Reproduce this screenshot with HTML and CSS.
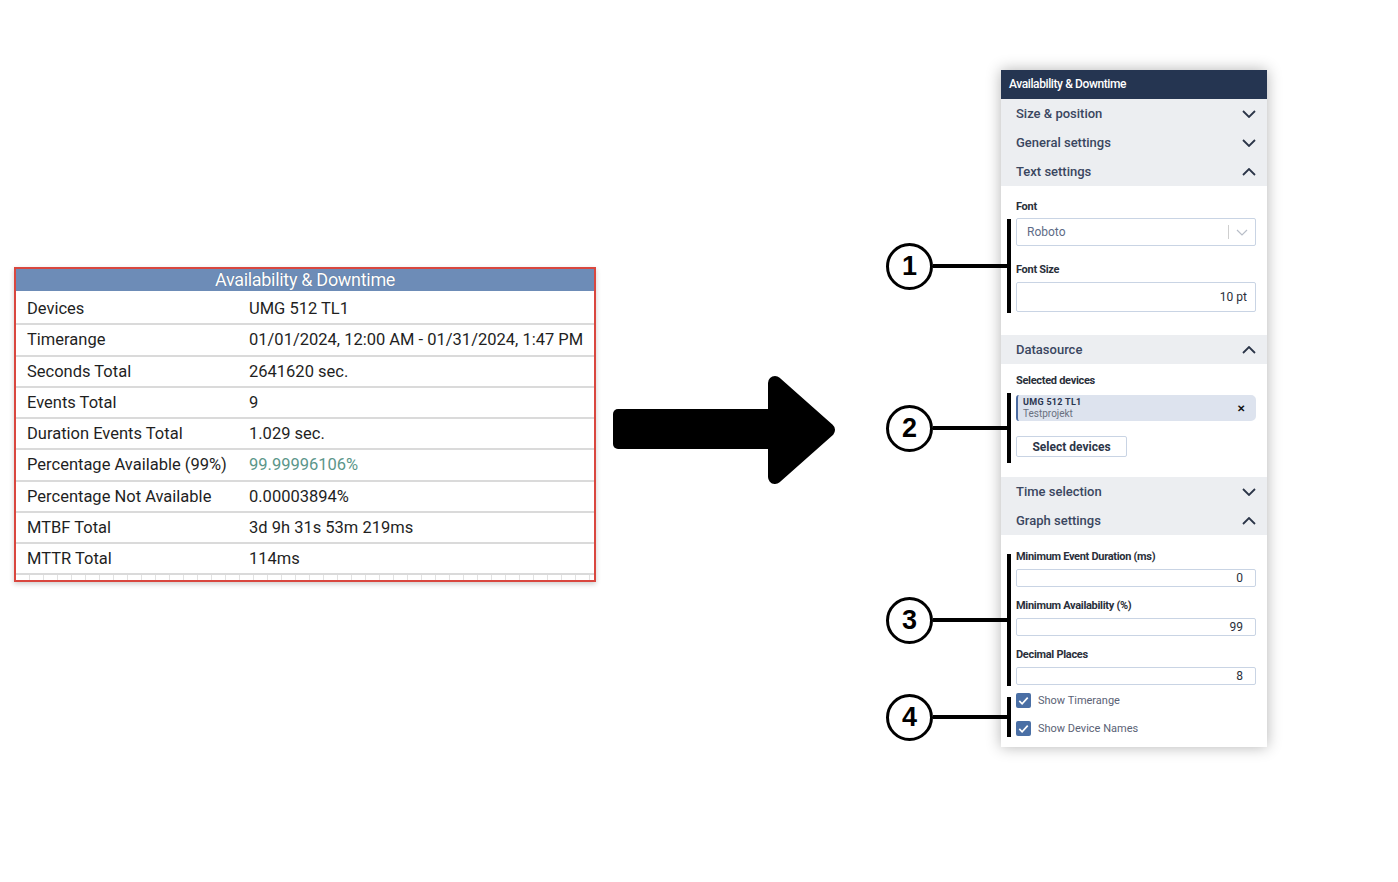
FILE: index.html
```html
<!DOCTYPE html>
<html lang="en">
<head>
  <meta charset="UTF-8">
  <title>Availability &amp; Downtime</title>
  <link rel="stylesheet" href="styles.css">
</head>
<body>

  <div class="canvas">

    <!-- widget preview -->
    <div class="report">
      <div class="report-title">Availability &amp; Downtime</div>
      <div class="report-row first"><span>Devices</span><span>UMG 512 TL1</span></div>
      <div class="report-row"><span>Timerange</span><span>01/01/2024, 12:00 AM - 01/31/2024, 1:47 PM</span></div>
      <div class="report-row"><span>Seconds Total</span><span>2641620 sec.</span></div>
      <div class="report-row"><span>Events Total</span><span>9</span></div>
      <div class="report-row"><span>Duration Events Total</span><span>1.029 sec.</span></div>
      <div class="report-row"><span>Percentage Available (99%)</span><span class="ok">99.99996106%</span></div>
      <div class="report-row"><span>Percentage Not Available</span><span>0.00003894%</span></div>
      <div class="report-row"><span>MTBF Total</span><span>3d 9h 31s 53m 219ms</span></div>
      <div class="report-row"><span>MTTR Total</span><span>114ms</span></div>
      <div class="report-end"></div>
    </div>

    <div class="arrow">
      <svg width="224" height="110" viewBox="0 0 224 110">
        <rect x="0" y="34" width="172" height="40" rx="5" fill="#000"/>
        <polygon points="162,8 215,55 162,102" fill="#000" stroke="#000" stroke-width="14" stroke-linejoin="round"/>
      </svg>
    </div>

    <!-- settings sidebar -->
    <div class="panel-wrap">
      <div class="panel">
        <div class="panel-title">Availability &amp; Downtime</div>

        <div class="acc">Size &amp; position
          <svg viewBox="0 0 14 8"><polyline points="1,1 7,7 13,1"/></svg>
        </div>
        <div class="acc">General settings
          <svg viewBox="0 0 14 8"><polyline points="1,1 7,7 13,1"/></svg>
        </div>
        <div class="acc">Text settings
          <svg viewBox="0 0 14 8"><polyline points="1,7 7,1 13,7"/></svg>
        </div>

        <div class="section text-section">
          <div class="field-label">Font</div>
          <div class="select">
            <span>Roboto</span>
            <span class="select-tail">
              <i class="divider"></i>
              <svg viewBox="0 0 12 7"><polyline points="1,1 6,6 11,1"/></svg>
            </span>
          </div>
          <div class="field-label spaced">Font Size</div>
          <div class="input tall">10 pt</div>
        </div>

        <div class="acc">Datasource
          <svg viewBox="0 0 14 8"><polyline points="1,7 7,1 13,7"/></svg>
        </div>

        <div class="section source-section">
          <div class="field-label">Selected devices</div>
          <div class="chip">
            <div>
              <div class="chip-name">UMG 512 TL1</div>
              <div class="chip-project">Testprojekt</div>
            </div>
            <span class="chip-x">&#x2715;</span>
          </div>
          <button class="select-btn">Select devices</button>
        </div>

        <div class="acc">Time selection
          <svg viewBox="0 0 14 8"><polyline points="1,1 7,7 13,1"/></svg>
        </div>
        <div class="acc">Graph settings
          <svg viewBox="0 0 14 8"><polyline points="1,7 7,1 13,7"/></svg>
        </div>

        <div class="section graph-section">
          <div class="field-label">Minimum Event Duration (ms)</div>
          <div class="input">0</div>
          <div class="field-label gap">Minimum Availability (%)</div>
          <div class="input">99</div>
          <div class="field-label gap">Decimal Places</div>
          <div class="input">8</div>
          <div class="check first-check">
            <span class="box"><svg viewBox="0 0 16 16"><polyline points="3.5,8.5 6.5,11.5 12.5,5"/></svg></span>
            Show Timerange
          </div>
          <div class="check">
            <span class="box"><svg viewBox="0 0 16 16"><polyline points="3.5,8.5 6.5,11.5 12.5,5"/></svg></span>
            Show Device Names
          </div>
        </div>
      </div>

      <!-- numbered callouts -->
      <div class="callout c1"><span class="num">1</span><i class="lead"></i></div>
      <div class="callout c2"><span class="num">2</span><i class="lead"></i></div>
      <div class="callout c3"><span class="num">3</span><i class="lead"></i></div>
      <div class="callout c4"><span class="num">4</span><i class="lead"></i></div>
    </div>

  </div>

</body>
</html>
```

FILE: styles.css
```css
body {
  margin: 0;
  background: #fff;
  font-family: Roboto, "Liberation Sans", sans-serif;
}
.canvas {
  display: flex;
  align-items: flex-start;
  padding-left: 14px;
  height: 882px;
  box-sizing: border-box;
}

/* report widget */
.report {
  margin-top: 267px;
  width: 582px;
  border: 2px solid #d9473f;
  box-sizing: border-box;
  background: #fff;
  box-shadow: 0 2px 5px rgba(0, 0, 0, 0.2);
}
.report-title {
  height: 22px;
  line-height: 22px;
  background: #6d8cb7;
  color: #fff;
  text-align: center;
  font-size: 18px;
  letter-spacing: -0.3px;
  text-shadow: 0 0 1px rgba(0, 0, 0, 0.3);
}
.report-row {
  display: grid;
  grid-template-columns: 222px 1fr;
  height: 29.25px;
  line-height: 29.25px;
  border-bottom: 2px solid #dadada;
  font-size: 16.5px;
  color: #1f1f1f;
}
.report-row.first {
  padding-top: 3px;
}
.report-row span {
  padding-left: 11px;
  white-space: nowrap;
}
.report-row .ok {
  color: #5b968a;
}
.report-end {
  height: 5px;
  background: repeating-linear-gradient(90deg, #fff 0 13px, #e2e2e2 13px 14px);
}

.arrow {
  margin-left: 17px;
  margin-top: 375px;
  height: 110px;
}

/* settings panel */
.panel-wrap {
  position: relative;
  margin-left: 164px;
  margin-top: 70px;
}
.panel {
  width: 266px;
  background: #fff;
  box-shadow: 0 0 14px rgba(0, 0, 0, 0.3);
}
.panel-title {
  height: 29px;
  line-height: 29px;
  padding-left: 8px;
  background: #253551;
  color: #fff;
  font-size: 12px;
  font-weight: 500;
  letter-spacing: -0.4px;
}
.acc {
  display: flex;
  justify-content: space-between;
  align-items: center;
  height: 29px;
  padding: 0 11px 0 15px;
  background: #eceef1;
  color: #3a4660;
  font-size: 13px;
  font-weight: 500;
}
.acc svg {
  width: 14px;
  height: 8px;
  fill: none;
  stroke: #2b3548;
  stroke-width: 1.8;
}
.section {
  padding: 0 11px 0 15px;
}
.text-section {
  padding-top: 14px;
  padding-bottom: 23px;
}
.source-section {
  padding-top: 10px;
  padding-bottom: 20px;
}
.graph-section {
  padding-top: 15px;
  padding-bottom: 11px;
}
.field-label {
  font-size: 11px;
  font-weight: 700;
  line-height: 14px;
  color: #2a2f3a;
  letter-spacing: -0.3px;
  margin-bottom: 4px;
}
.field-label.spaced {
  margin-top: 17px;
  margin-bottom: 5px;
}
.source-section .field-label {
  margin-bottom: 7px;
}
.graph-section .field-label {
  margin-bottom: 5px;
}
.graph-section .field-label.gap {
  margin-top: 12px;
}
.select {
  display: flex;
  justify-content: space-between;
  align-items: center;
  height: 28px;
  box-sizing: border-box;
  border: 1px solid #c9d4e4;
  border-radius: 2px;
  padding: 0 7px 0 10px;
  font-size: 12px;
  color: #5d6b86;
}
.select-tail {
  display: flex;
  align-items: center;
  gap: 7px;
}
.select-tail .divider {
  width: 1px;
  height: 14px;
  background: #cfcfcf;
}
.select-tail svg {
  width: 12px;
  height: 7px;
  fill: none;
  stroke: #b8bec8;
  stroke-width: 1.2;
}
.input {
  height: 18px;
  line-height: 16px;
  box-sizing: border-box;
  border: 1px solid #c9d4e4;
  border-radius: 2px;
  padding-right: 12px;
  text-align: right;
  font-size: 12px;
  color: #2a2f3a;
}
.input.tall {
  height: 30px;
  line-height: 28px;
  padding-right: 8px;
}
.chip {
  display: flex;
  justify-content: space-between;
  align-items: center;
  height: 26px;
  box-sizing: border-box;
  background: #dde3ee;
  border-left: 2px solid #4a6aa0;
  border-radius: 3px 5px 5px 3px;
  padding: 0 11px 0 5px;
  margin-bottom: 15px;
}
.chip-name {
  font-size: 9px;
  font-weight: 700;
  line-height: 11px;
  letter-spacing: 0.3px;
  color: #2b3550;
}
.chip-project {
  font-size: 10px;
  line-height: 11px;
  color: #6a7080;
}
.chip-x {
  font-size: 10px;
  font-weight: 700;
  color: #111;
}
.select-btn {
  display: block;
  width: 111px;
  height: 21px;
  padding: 0;
  background: #fff;
  border: 1px solid #c9d4e4;
  border-radius: 2px;
  font-family: inherit;
  font-size: 12px;
  font-weight: 700;
  color: #2b3548;
}
.check {
  display: flex;
  align-items: center;
  gap: 7px;
  margin-top: 13px;
  height: 15px;
  font-size: 11px;
  color: #5a6275;
}
.check.first-check {
  margin-top: 8px;
}
.check .box {
  width: 15px;
  height: 15px;
  border-radius: 2px;
  background: #4a6fa5;
}
.check .box svg {
  width: 15px;
  height: 15px;
  fill: none;
  stroke: #fff;
  stroke-width: 1.8;
}

/* callouts */
.callout {
  position: absolute;
  left: -115px;
  width: 125px;
  display: flex;
  align-items: center;
  box-sizing: border-box;
  border-right: 4px solid #000;
}
.callout .num {
  flex: none;
  width: 47px;
  height: 47px;
  box-sizing: border-box;
  border: 3px solid #000;
  border-radius: 50%;
  background: #fff;
  text-align: center;
  line-height: 41px;
  font-family: "Liberation Sans", Arial, sans-serif;
  font-size: 27px;
  font-weight: 700;
  color: #000;
}
.callout .lead {
  flex: 1;
  height: 4px;
  background: #000;
}
.c1 { top: 149px; height: 94px; }
.c2 { top: 323px; height: 70px; }
.c3 { top: 484px; height: 132px; }
.c4 { top: 627px; height: 40px; }
```
